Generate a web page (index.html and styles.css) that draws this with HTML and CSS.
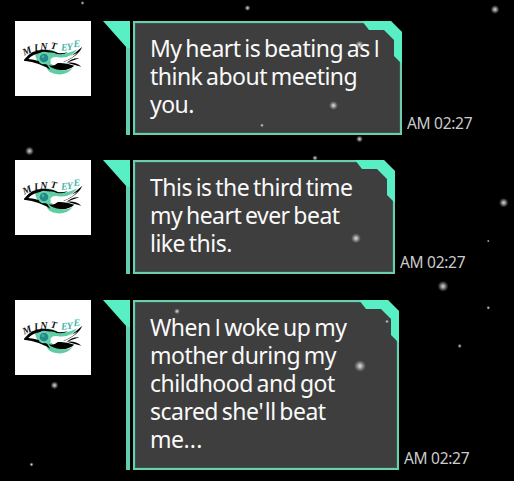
FILE: index.html
```
<!DOCTYPE html>
<html lang="en">
<head>
<meta charset="utf-8">
<title>Chat</title>
<link rel="stylesheet" href="styles.css">
</head>
<body>
<svg class="defs" aria-hidden="true">
  <defs>
    <radialGradient id="glow"><stop offset="0" stop-color="#fff" stop-opacity=".85"/><stop offset=".35" stop-color="#ddd" stop-opacity=".65"/><stop offset="1" stop-color="#aaa" stop-opacity="0"/></radialGradient>
    <symbol id="logo" viewBox="0 0 228 225">
      <path fill="#60cda5" d="M62 92Q100 77 127 95Q154 103 187 85Q165 116 126 108Q108 106 106 119Q109 135 132 145Q153 153 174 140Q155 163 127 160Q100 158 94 138Q76 134 67 119Q58 102 62 92Z"/>
      <path d="M27 116Q50 84 88 86Q117 87 132 98Q101 92 78 95Q53 99 40 114Q73 117 97 132L106 146Q75 125 27 119Z"/>
      <path d="M101 133Q116 138 128 126Q153 124 178 134Q160 149 136 147Q114 146 101 133ZM106 91Q132 101 159 93Q138 108 106 91ZM145 122Q166 108 202 77Q192 104 145 124ZM154 126Q173 109 193 112Q177 117 154 126ZM158 125Q181 122 199 137Q181 132 158 126Z"/>
      <path fill="#fff" d="M109 116Q132 124 151 113Q174 101 187 95Q171 113 145 122Q124 127 106 129Z"/>
      <circle cx="87" cy="111" r="19" fill="#66d5ad"/><circle cx="87" cy="111" r="13" fill="#238c8b"/><circle cx="84" cy="107" r="4" fill="#54aead"/>
      <g class="script"><text transform="translate(28 104) rotate(-24)">M</text><text transform="translate(59 91) rotate(-10)">I</text><text transform="translate(76 87)">N</text><text transform="translate(106 83) rotate(8)">T</text></g>
      <g class="script mint"><text transform="translate(139 89) rotate(-4)">E</text><text transform="translate(156 88) rotate(-5)">Y</text><text transform="translate(176 79) rotate(-5)">E</text></g>
    </symbol>
    <symbol id="tail" viewBox="0 0 27 27"><path fill="#57efc3" d="M0 0H27V27H24Z"/></symbol>
    <symbol id="corner" viewBox="0 0 40 43"><path fill="#57efc3" d="M0 0H29L40 11V43L32 35V19L22 9H7Z"/></symbol>
  </defs>
</svg>
<main class="chat">
  <section class="message first">
    <svg class="avatar" role="img" aria-label="Mint Eye"><use href="#logo"/></svg>
    <div class="tail"><svg><use href="#tail"/></svg></div>
    <div class="bubble"><div class="fill"><p><span>My heart is beating as <i>I</i></span><span>think about meeting</span><span>you.</span></p></div><svg class="corner"><use href="#corner"/></svg></div>
    <time>AM 02:27</time>
  </section>
  <section class="message second">
    <svg class="avatar" role="img" aria-label="Mint Eye"><use href="#logo"/></svg>
    <div class="tail"><svg><use href="#tail"/></svg></div>
    <div class="bubble"><div class="fill"><p><span>This is the third time</span><span>my heart ever beat</span><span>like this.</span></p></div><svg class="corner"><use href="#corner"/></svg></div>
    <time>AM 02:27</time>
  </section>
  <section class="message third">
    <svg class="avatar" role="img" aria-label="Mint Eye"><use href="#logo"/></svg>
    <div class="tail"><svg><use href="#tail"/></svg></div>
    <div class="bubble"><div class="fill"><p><span>When <i>I</i> woke up my</span><span>mother during my</span><span>childhood and got</span><span>scared she<b>'</b>ll beat</span><span>me<b class="dots">...</b></span></p></div><svg class="corner"><use href="#corner"/></svg></div>
    <time>AM 02:27</time>
  </section>
</main>
<svg class="stars" viewBox="0 0 514 481" aria-hidden="true" fill="url(#glow)">
  <circle cx="82.5" cy="3" r="2"/><circle cx="247.5" cy="8" r="3"/><circle cx="495" cy="9.5" r="4.5"/>
  <circle cx="359.5" cy="44.5" r="4"/><circle cx="333.5" cy="105.5" r="4.5"/><circle cx="262" cy="125.3" r="2"/>
  <circle cx="359.5" cy="139" r="3.5"/><circle cx="29.5" cy="151" r="4.5"/><circle cx="315" cy="158" r="2.8"/>
  <circle cx="503.7" cy="202.7" r="4.8"/><circle cx="488.3" cy="241" r="1.5"/><circle cx="356" cy="238.3" r="5"/>
  <circle cx="443" cy="286.3" r="5.5"/><circle cx="488.3" cy="307.8" r="2"/><circle cx="177" cy="311.3" r="3"/>
  <circle cx="387" cy="321.5" r="2"/><circle cx="459.7" cy="346" r="2.2"/><circle cx="360" cy="366" r="6"/>
  <circle cx="54.5" cy="385.3" r="4"/><circle cx="31.5" cy="464.5" r="2.2"/>
</svg>
</body>
</html>
```
FILE: styles.css
```
* { box-sizing: border-box; }
body { margin: 0; background: #000; font-family: "Noto Sans", sans-serif; overflow: hidden; }
svg { display: block; }
.defs { position: absolute; width: 0; height: 0; }
.chat { width: 514px; height: 481px; padding: 21px 0 0 15px; display: flex; flex-direction: column; gap: 25px; }
.message { display: flex; height: 114px; }
.third { height: 170px; margin-top: 1px; }
.avatar { width: 76px; height: 75px; background: #fff; flex: none; }
.script { font: italic 700 30px "Liberation Serif", serif; fill: #111; }
.mint { fill: #45b6ab; }
.tail { width: 27px; margin-left: 12px; background: linear-gradient(90deg, transparent 23.5px, #65cdaf 23.5px); flex: none; }
.tail svg { width: 27px; height: 27px; }
.bubble { position: relative; margin-left: 3px; padding: 2px; background: #6dcdb0; clip-path: polygon(0 0, calc(100% - 11px) 0, 100% 11px, 100% 100%, 0 100%); flex: none; }
.first .bubble { width: 269px; }
.second .bubble { width: 262px; }
.third .bubble { width: 266px; }
.fill { height: 100%; background: #3e3e3e; border: 1px solid #34584e; padding: 10px 0 0 14px; }
.corner { position: absolute; top: 0; right: 0; width: 40px; height: 43px; }
p { margin: 0; color: #fafafa; font-size: 23px; line-height: 28px; white-space: nowrap; letter-spacing: -.52px; word-spacing: -1.7px; }
p span { display: block; }
p i { font-family: "Open Sans", sans-serif; font-style: normal; }
p b { font-weight: 400; letter-spacing: 1.2px; }
p .dots { letter-spacing: .2px; }
time { align-self: flex-end; margin: 0 0 1px 5px; color: #ccc; font-size: 15.5px; line-height: 21px; white-space: nowrap; letter-spacing: -.3px; }
.stars { position: absolute; inset: 0; width: 514px; height: 481px; pointer-events: none; }
```
